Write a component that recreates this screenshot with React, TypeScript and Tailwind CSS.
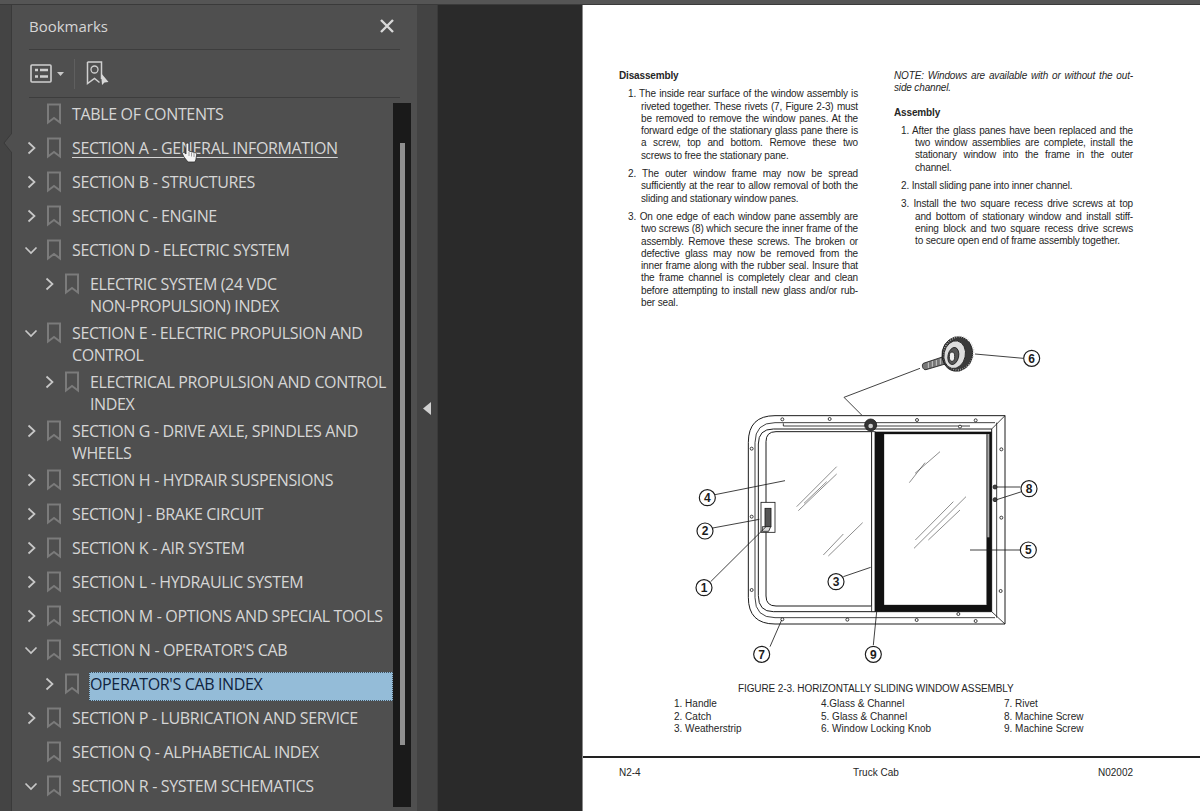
const rows = [
  { lines: ["TABLE OF CONTENTS"], level: 0, toggle: "none" },
  { lines: ["SECTION A - GENERAL INFORMATION"], level: 0, toggle: "right", hover: true },
  { lines: ["SECTION B - STRUCTURES"], level: 0, toggle: "right" },
  { lines: ["SECTION C - ENGINE"], level: 0, toggle: "right" },
  { lines: ["SECTION D - ELECTRIC SYSTEM"], level: 0, toggle: "down" },
  { lines: ["ELECTRIC SYSTEM (24 VDC", "NON-PROPULSION) INDEX"], level: 1, toggle: "right" },
  { lines: ["SECTION E - ELECTRIC PROPULSION AND", "CONTROL"], level: 0, toggle: "down" },
  { lines: ["ELECTRICAL PROPULSION AND CONTROL", "INDEX"], level: 1, toggle: "right" },
  { lines: ["SECTION G - DRIVE AXLE, SPINDLES AND", "WHEELS"], level: 0, toggle: "right" },
  { lines: ["SECTION H - HYDRAIR SUSPENSIONS"], level: 0, toggle: "right" },
  { lines: ["SECTION J - BRAKE CIRCUIT"], level: 0, toggle: "right" },
  { lines: ["SECTION K - AIR SYSTEM"], level: 0, toggle: "right" },
  { lines: ["SECTION L - HYDRAULIC SYSTEM"], level: 0, toggle: "right" },
  { lines: ["SECTION M - OPTIONS AND SPECIAL TOOLS"], level: 0, toggle: "right" },
  { lines: ["SECTION N - OPERATOR'S CAB"], level: 0, toggle: "down" },
  { lines: ["OPERATOR'S CAB INDEX"], level: 1, toggle: "right", selected: true },
  { lines: ["SECTION P - LUBRICATION AND SERVICE"], level: 0, toggle: "right" },
  { lines: ["SECTION Q - ALPHABETICAL INDEX"], level: 0, toggle: "none" },
  { lines: ["SECTION R - SYSTEM SCHEMATICS"], level: 0, toggle: "down" },
]

const Toggle = ({ kind }: { kind: string }) => (
  <svg width="16" height="22" viewBox="0 0 16 22" fill="none" stroke="#c8c8c8" strokeWidth="1.7" className="shrink-0">
    {kind === "right" && <path d="M5.500 5.500 11.500 11 5.500 16.500" />}
    {kind === "down" && <path d="M2.500 8.500 8 14 13.500 8.500" />}
  </svg>
)

const Ribbon = () => (
  <svg width="16" height="22" viewBox="0 0 16 22" fill="none" stroke="#7b7b7b" strokeWidth="2" className="ml-[7px] shrink-0">
    <path d="M2 1.500h12v18l-6-4.600-6 4.600z" />
  </svg>
)

const Row = ({ row }: { row: (typeof rows)[number] }) => (
  <div className={`flex items-start pt-[5px] ${row.lines.length > 1 ? "h-[49px]" : "h-[34px]"} ${row.level ? "pl-[29px]" : "pl-[11px]"}`}>
    <Toggle kind={row.toggle} />
    <Ribbon />
    {row.selected ? (
      <div className="ml-[9px] -mt-[1px] h-[29px] flex-1 border border-dotted border-[#3f4f5c] bg-[#94bcd8] text-[#10243f]">
        {row.lines[0]}
      </div>
    ) : (
      <div className={`ml-[10px] whitespace-nowrap ${row.hover ? "underline underline-offset-[3px]" : ""}`}>
        {row.lines.map((line) => (
          <div key={line}>{line}</div>
        ))}
      </div>
    )}
  </div>
)

const Sidebar = () => (
  <div className="relative flex h-full">
    <div className="w-[12px] shrink-0 border-r border-[#3a3a3a] bg-[#444444]" />
    <svg width="9" height="20" viewBox="0 0 9 20" className="absolute left-[3px] top-[128px]">
      <path d="M9 0 1 10l8 10z" fill="#4f4f4f" />
      <path d="M9 0 1 10l8 10" fill="none" stroke="#3a3a3a" />
    </svg>
    <div className="flex h-full w-[405px] shrink-0 flex-col bg-[#4f4f4f] text-[#d6d6d6]">
      <div className="mx-[17px] flex h-[45px] shrink-0 items-center justify-between border-b border-[#3d3d3d] pb-[2px] pr-[6px]">
        <span className="text-[15px]">Bookmarks</span>
        <svg width="14" height="14" viewBox="0 0 14 14" stroke="#d8d8d8" strokeWidth="2.400">
          <path d="M1 1l12 12M13 1 1 13" />
        </svg>
      </div>
      <div className="mx-[17px] flex h-[48px] shrink-0 items-center border-b border-[#3d3d3d]">
        <svg width="22" height="19" viewBox="0 0 22 19" fill="none" stroke="#cfcfcf" className="ml-px">
          <rect x="1" y="1" width="20" height="17" rx="1" strokeWidth="1.600" />
          <path d="M5 6h3M5 12.500h3M10 6h8M10 12.500h8" strokeWidth="2.400" />
        </svg>
        <svg width="7" height="4" viewBox="0 0 7 4" className="ml-[5px]">
          <path d="M0 0h7L3.500 4z" fill="#c8c8c8" />
        </svg>
        <div className="ml-[10px] h-[30px] w-px bg-[#5f5f5f]" />
        <svg width="23" height="25" viewBox="0 0 23 25" fill="none" className="ml-[11px]">
          <path d="M1.500 1h14v17M1.500 1v21.500l7-5 5 4" stroke="#cfcfcf" strokeWidth="1.500" />
          <circle cx="8.500" cy="8.500" r="3.500" stroke="#cfcfcf" strokeWidth="1.300" />
          <path d="M15 12l7.500 9-4 .5-2.500 2.500z" fill="#d8d8d8" />
        </svg>
      </div>
      <div className="flex min-h-0 flex-1 text-[16px] leading-[22px] tracking-[-0.35px]">
        <div className="w-[381px] shrink-0 overflow-hidden">
          {rows.map((row) => (
            <Row key={row.lines[0]} row={row} />
          ))}
        </div>
        <div className="mb-[4px] mt-[5px] w-[18px] shrink-0 bg-[#1a1a1a] pl-[7px] pt-[40px]">
          <div className="h-[602px] w-[5px] bg-[#8f8f8f]" />
        </div>
      </div>
    </div>
    <div className="flex w-[20px] shrink-0 items-center justify-center bg-[#434343]">
      <svg width="8" height="13" viewBox="0 0 8 13">
        <path d="M8 0v13L0 6.500z" fill="#d0d0d0" />
      </svg>
    </div>
    {/* hand cursor */}
    <svg width="20" height="24" viewBox="0 0 20 24" className="absolute left-[180px] top-[136px]">
      <path d="M6 13V3.500a1.400 1.400 0 0 1 2.800 0V10l6 1.500c1.500.4 2 1.200 1.800 2.700l-.8 4.800-1 2H8l-4-5-1.500-3c-.5-1.400 1-2.200 2-1.200z" fill="#f4f4f4" stroke="#2f2f2f" strokeWidth="0.800" />
      <path d="M9 11v4M11.500 11.500v4M14 12v4" stroke="#777777" strokeWidth="0.700" />
    </svg>
  </div>
)

const Justified = ({ text, last, className = "" }: { text: string; last?: boolean; className?: string }) => (
  <div className={`${last ? "" : "[text-align-last:justify]"} ${className}`}>{text}</div>
)

const Item = ({ num, lines, left, rest }: { num: string; lines: string[]; left: string; rest: string }) => (
  <div className="mb-[6px]">
    {lines.map((line, i) => (
      <Justified
        key={line}
        text={i === 0 ? `${num} ${line}` : line}
        last={i === lines.length - 1}
        className={i === 0 ? left : rest}
      />
    ))}
  </div>
)

const Figure = () => (
  <svg width="380" height="340" viewBox="0 0 1140 1020" fill="none" stroke="#1c1c1c" strokeWidth="2.500" className="ml-[97px] block">
    {/* knob */}
    <path d="M730 100l75-25 8 22-75 22c-10 2-14-14-8-19z" fill="#777777" />
    <path d="M745 97v17M757 93v17M769 90v17M781 86v17M793 83v17" stroke="#f5f5f5" strokeWidth="2" />
    <ellipse cx="832" cy="72" rx="46" ry="52" transform="rotate(12 832 72)" fill="#3a3a3a" />
    <ellipse cx="836" cy="70" rx="44" ry="50" transform="rotate(12 836 70)" fill="none" stroke="#bbbbbb" strokeWidth="6" strokeDasharray="2 5" />
    <ellipse cx="824" cy="74" rx="32" ry="42" transform="rotate(12 824 74)" fill="#dddddd" />
    <ellipse cx="820" cy="78" rx="16" ry="26" transform="rotate(12 820 78)" fill="#555555" />
    <ellipse cx="816" cy="80" rx="8" ry="14" fill="#eeeeee" />
    <path d="M885 72l145 13M720 115 492 202l53 53" />

    {/* frame */}
    <path d="M975 257H285q-80 0-80 80v465q0 80 80 80h690z" strokeWidth="3" />
    <path d="M945 278H285q-60 0-60 60v465q0 60 60 60h660" />
    <path d="M935 297H280q-45 0-45 45v455q0 48 45 48h655z" strokeWidth="3" />
    <path d="M975 257l-40 40M975 882l-40-37" />
    <path d="M950 278v585" />
    <path d="M310 280v8h560" />

    {/* sash and glass */}
    <path d="M575 305H288q-30 0-30 30v463q0 30 30 30h287z" strokeWidth="3" />
    <rect x="575" y="305" width="10" height="540" fill="#ffffff" />
    <rect x="585" y="305" width="350" height="540" fill="#111111" stroke="none" />
    <rect x="612" y="312" width="308" height="513" fill="#ffffff" strokeWidth="1" />
    <path d="M922 312h6v310h-6z" fill="#aaaaaa" stroke="none" />
    <path d="M350 530 470 410M372 520 440 455M355 542 470 432M430 675 490 612M445 678 548 578M688 458 735 398M705 430 780 365M706 630 820 515M702 655 858 500M745 630 840 540" strokeWidth="1.500" />

    {/* catch */}
    <rect x="243" y="517" width="42" height="90" fill="#ffffff" />
    <rect x="255" y="535" width="18" height="55" fill="#555555" />
    <path d="M247 590h25l-6 14h-19z" fill="#dddddd" />

    {/* rivets */}
    {[[307, 268], [449, 267], [711, 270], [887, 271], [215, 356], [215, 560], [215, 780], [964, 358], [964, 563], [962, 783], [307, 868], [502, 869], [710, 870], [887, 873], [840, 290], [835, 852]].map(([cx, cy]) => (
      <circle key={`${cx}-${cy}`} cx={cx} cy={cy} r="4.500" fill="#ffffff" />
    ))}
    <circle cx="945" cy="471" r="6" fill="#444444" />
    <circle cx="945" cy="509" r="6" fill="#444444" />
    <circle cx="572" cy="285" r="18" fill="#333333" />
    <circle cx="572" cy="288" r="7" fill="#cccccc" stroke="none" />

    {/* leaders */}
    <path d="M105 494 315 452M98 594 238 568M92 755 258 590M490 740 572 712M1022 660H870M270 950l35-80M580 945l10-100M950 471h72M950 509l75-24" />

    {/* callouts */}
    {[["6", 1055, 85], ["8", 1047, 476], ["4", 82, 503], ["2", 75, 603], ["1", 72, 773], ["3", 468, 755], ["5", 1045, 660], ["7", 245, 973], ["9", 580, 973]].map(([label, x, y]) => (
      <g key={label as string}>
        <circle cx={x as number} cy={y as number} r="24" fill="#ffffff" strokeWidth="3.500" />
        <text x={x as number} y={(y as number) + 13} textAnchor="middle" fontSize="36" fontWeight="700" fill="#1c1c1c" stroke="none" fontFamily="Liberation Sans, sans-serif">
          {label as string}
        </text>
      </g>
    ))}
  </svg>
)

const Page = () => (
  <div className="relative flex h-full flex-1 flex-col border-l border-[#8a8a8a] bg-white font-['Liberation_Sans',sans-serif] text-[10px] leading-[12.3px] text-[#262626]">
    <div className="flex h-[325px] shrink-0 gap-[36px] pl-[36px] pt-[65px] tracking-[-0.15px]">
      <div className="w-[239px]">
        <div className="mb-[6px] font-bold">Disassembly</div>
        <Item
          num="1."
          left="pl-[9px]"
          rest="pl-[22px]"
          lines={[
            "The inside rear surface of the window assembly is",
            "riveted together. These rivets (7, Figure 2-3) must",
            "be removed to remove the window panes.  At the",
            "forward edge of the stationary glass pane there is",
            "a screw, top and bottom. Remove these two",
            "screws to free the stationary pane.",
          ]}
        />
        <Item
          num="2."
          left="pl-[9px]"
          rest="pl-[22px]"
          lines={[
            "The outer window frame may now be spread",
            "sufficiently at the rear to allow removal of both the",
            "sliding and stationary window panes.",
          ]}
        />
        <Item
          num="3."
          left="pl-[9px]"
          rest="pl-[22px]"
          lines={[
            "On one edge of each window pane assembly are",
            "two screws (8) which secure the inner frame of the",
            "assembly. Remove these screws. The broken or",
            "defective glass may now be removed from the",
            "inner frame along with the rubber seal. Insure that",
            "the frame channel is completely clear and clean",
            "before attempting to install new glass and/or rub-",
            "ber seal.",
          ]}
        />
      </div>
      <div className="w-[239px]">
        <div className="mb-[12px] italic">
          <Justified text="NOTE: Windows are available with or without the out-" />
          <div>side channel.</div>
        </div>
        <div className="mb-[6px] font-bold">Assembly</div>
        <Item
          num="1."
          left="pl-[7px]"
          rest="pl-[21px]"
          lines={[
            "After the glass panes have been replaced and the",
            "two window assemblies are complete, install the",
            "stationary window into the frame in the outer",
            "channel.",
          ]}
        />
        <Item num="2." left="pl-[7px]" rest="pl-[21px]" lines={["Install sliding pane into inner channel."]} />
        <Item
          num="3."
          left="pl-[7px]"
          rest="pl-[21px]"
          lines={[
            "Install the two square recess drive screws at top",
            "and bottom of stationary window and install stiff-",
            "ening block and two square recess drive screws",
            "to secure open end of frame assembly together.",
          ]}
        />
      </div>
    </div>
    <Figure />
    <div className="mt-[13px] pl-[155px] tracking-[-0.1px]">FIGURE 2-3. HORIZONTALLY SLIDING WINDOW ASSEMBLY</div>
    <div className="mt-[3px] grid grid-cols-[147px_183px_1fr] pl-[91px]">
      <div>
        <div>1. Handle</div>
        <div>2. Catch</div>
        <div>3. Weatherstrip</div>
      </div>
      <div>
        <div>4.Glass &amp; Channel</div>
        <div>5. Glass &amp; Channel</div>
        <div>6. Window Locking Knob</div>
      </div>
      <div>
        <div>7. Rivet</div>
        <div>8. Machine Screw</div>
        <div>9. Machine Screw</div>
      </div>
    </div>
    <div className="mt-[21px] h-[2px] bg-[#222222]" />
    <div className="mt-[9px] grid grid-cols-[234px_245px_1fr] pl-[36px]">
      <div>N2-4</div>
      <div>Truck Cab</div>
      <div>N02002</div>
    </div>
  </div>
)

export default function App() {
  return (
    <div className="flex h-[811px] w-[1200px] flex-col overflow-hidden bg-[#2a2a2a] font-['Open_Sans',sans-serif]">
      <div className="h-[5px] shrink-0 border-b border-[#3a3a3a] bg-[#555555]" />
      <div className="flex min-h-0 flex-1">
        <Sidebar />
        <div className="h-full w-[145px] shrink-0 border-l border-[#3a3a3a] bg-[#2a2a2a]" />
        <Page />
      </div>
    </div>
  )
}
